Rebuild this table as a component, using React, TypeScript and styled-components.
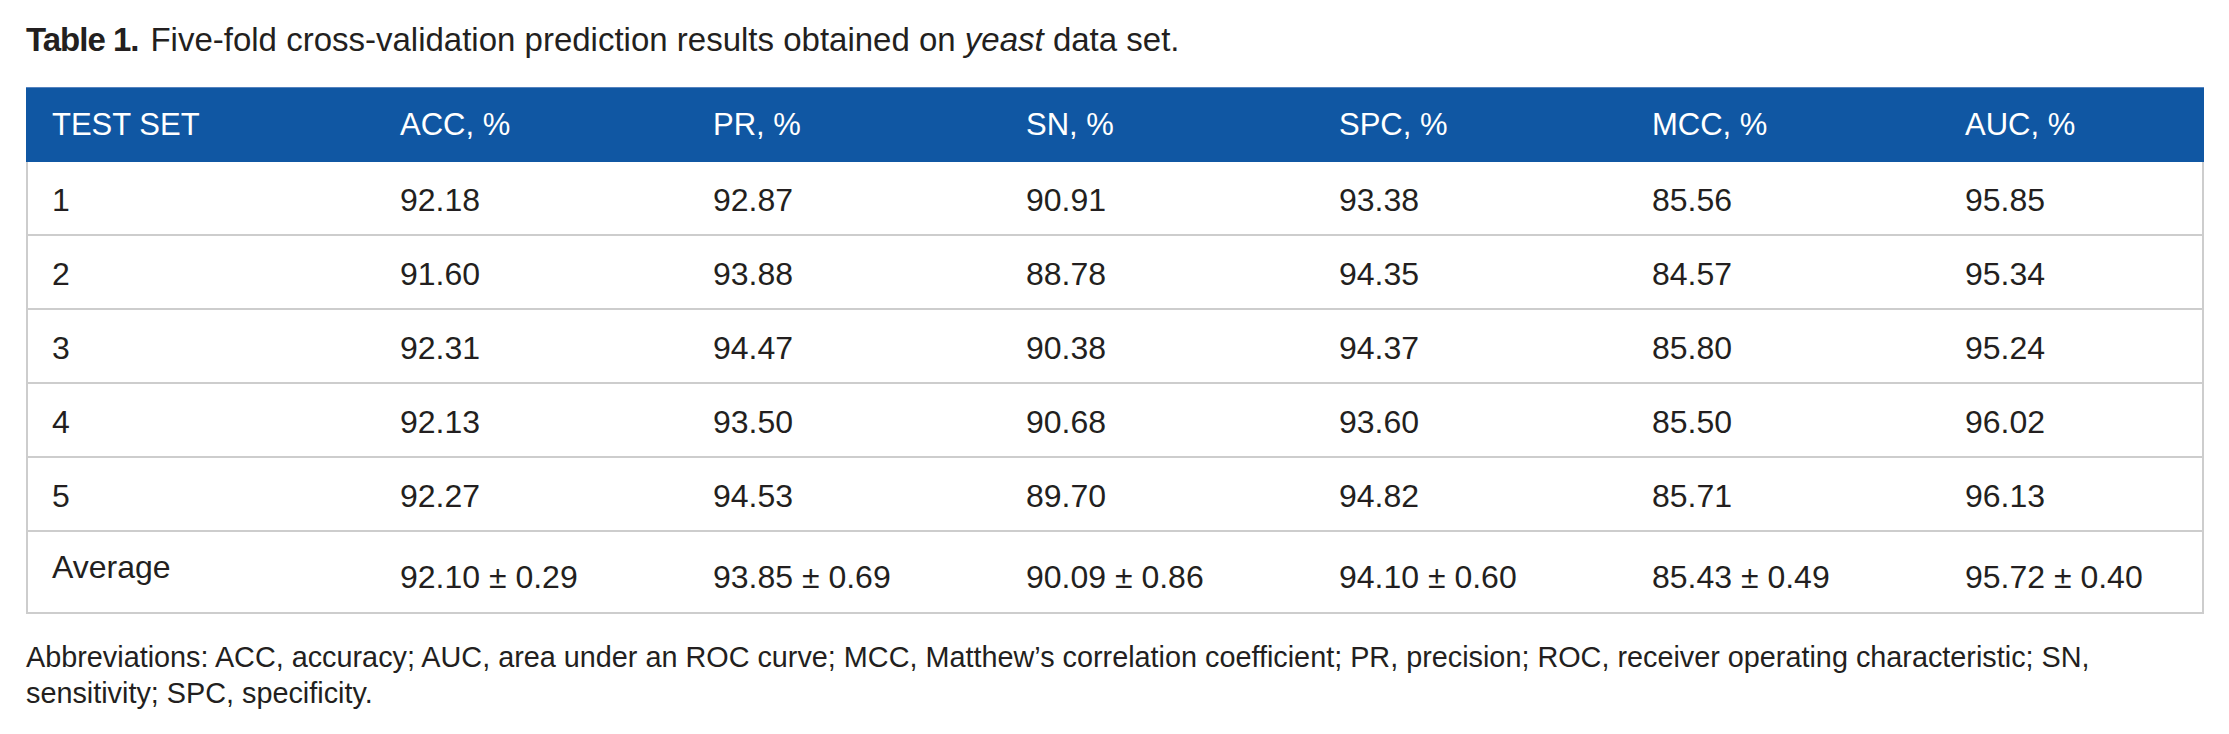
import styled, { createGlobalStyle } from "styled-components";

const GlobalStyle = createGlobalStyle`
  html, body {
    margin: 0;
    background: #ffffff;
  }
  body {
    font-family: "Liberation Sans", Arial, Helvetica, sans-serif;
    color: #231f20;
  }
`;

const columns = ["TEST SET", "ACC, %", "PR, %", "SN, %", "SPC, %", "MCC, %", "AUC, %"];

const rows = [
  ["1", "92.18", "92.87", "90.91", "93.38", "85.56", "95.85"],
  ["2", "91.60", "93.88", "88.78", "94.35", "84.57", "95.34"],
  ["3", "92.31", "94.47", "90.38", "94.37", "85.80", "95.24"],
  ["4", "92.13", "93.50", "90.68", "93.60", "85.50", "96.02"],
  ["5", "92.27", "94.53", "89.70", "94.82", "85.71", "96.13"],
];

const average = [
  ["92.10", "0.29"],
  ["93.85", "0.69"],
  ["90.09", "0.86"],
  ["94.10", "0.60"],
  ["85.43", "0.49"],
  ["95.72", "0.40"],
];

const widths = [311, 313, 313, 313, 313, 313, 302];

const App = () => {
  return (
    <Page>
      <GlobalStyle />
      <Caption>
        <Label>Table 1.</Label>
        Five-fold cross-validation prediction results obtained on <em>yeast</em> data set.
      </Caption>
      <Table>
        <colgroup>
          {widths.map((w, i) => (
            <col key={i} style={{ width: w }} />
          ))}
        </colgroup>
        <thead>
          <tr>
            {columns.map((c, i) => (
              <THead key={c} $first={i === 0}>
                {c}
              </THead>
            ))}
          </tr>
        </thead>
        <tbody>
          {rows.map((r) => (
            <tr key={r[0]}>
              {r.map((v, i) => (
                <TData key={i} $first={i === 0} $last={i === r.length - 1}>
                  {v}
                </TData>
              ))}
            </tr>
          ))}
          <tr>
            <AvgLabel $first>Average</AvgLabel>
            {average.map(([m, sd], i) => (
              <AvgData key={i} $last={i === average.length - 1}>
                {m} ± {sd}
              </AvgData>
            ))}
          </tr>
        </tbody>
      </Table>
      <Footnote>
        Abbreviations: ACC, accuracy; AUC, area under an ROC curve; MCC, Matthew’s correlation
        coefficient; PR, precision; ROC, receiver operating characteristic; SN, sensitivity; SPC,
        specificity.
      </Footnote>
    </Page>
  );
};

const Page = styled.div`
  padding: 22px 0 0 26px;
  width: 2178px;
`;

const Caption = styled.div`
  font-size: 33px;
  line-height: 36px;
  color: #231f20;
  margin-bottom: 29px;
  white-space: nowrap;

  & em {
    font-style: italic;
  }
`;

const Label = styled.span`
  font-weight: 700;
  letter-spacing: -1px;
  margin-right: 12px;
`;

const Table = styled.table`
  border-collapse: separate;
  border-spacing: 0;
  table-layout: fixed;
  width: 2178px;
`;

type CellProps = { $first?: boolean; $last?: boolean };

const THead = styled.th<CellProps>`
  box-sizing: border-box;
  height: 75px;
  padding: 0 0 0 ${(p) => (p.$first ? 26 : 63)}px;
  background: #1057a3;
  border-top: 1px solid #5583bf;
  color: #ffffff;
  font-size: 31px;
  font-weight: 400;
  line-height: 36px;
  text-align: left;
  vertical-align: middle;
  white-space: nowrap;
`;

const TData = styled.td<CellProps>`
  box-sizing: border-box;
  height: 74px;
  padding: 3px 0 0 ${(p) => (p.$first ? 24 : 63)}px;
  font-size: 32px;
  line-height: 36px;
  vertical-align: middle;
  white-space: nowrap;
  border-bottom: 2px solid #cdcdcd;
  border-left: ${(p) => (p.$first ? "2px solid #cdcdcd" : "none")};
  border-right: ${(p) => (p.$last ? "2px solid #cdcdcd" : "none")};
`;

const AvgLabel = styled(TData)`
  height: 82px;
  padding-top: 17px;
  vertical-align: top;
`;

const AvgData = styled(TData)`
  height: 82px;
  padding-top: 27px;
  vertical-align: top;
`;

const Footnote = styled.p`
  margin: 25px 0 0;
  font-size: 28.8px;
  line-height: 36px;
  color: #231f20;
`;

export default App;
